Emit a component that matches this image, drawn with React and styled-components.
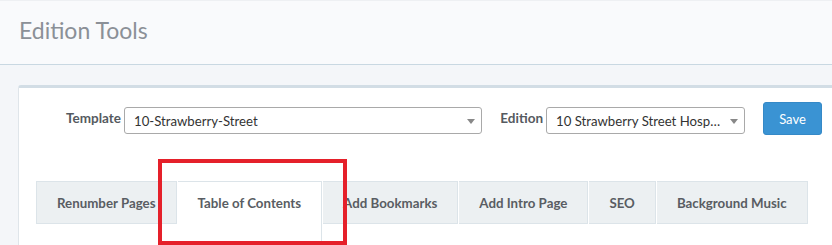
import React from "react";
import styled, { createGlobalStyle } from "styled-components";

const GlobalStyle = createGlobalStyle`
  html, body {
    margin: 0;
    padding: 0;
    background: #f4f6f9;
    font-family: "Lato", "Open Sans", sans-serif;
  }
  * {
    box-sizing: border-box;
  }
`;

const Page = styled.div`
  width: 832px;
  height: 245px;
  overflow: hidden;
  position: relative;
`;

const Header = styled.div`
  height: 65px;
  background: #f9fafc;
  border-top: 1px solid #eef0f3;
  border-bottom: 1px solid #c9d8e2;
  display: flex;
  align-items: center;
  padding: 0 0 6px 19px;
`;

const Title = styled.h1`
  margin: 0;
  font-size: 23px;
  font-weight: 400;
  color: #8b9097;
`;

const Body = styled.div`
  padding: 20px 0 0 18px;
`;

const Card = styled.div`
  background: #fff;
  border-top: 3px solid #d2dde5;
  border-left: 1px solid #dfe5ea;
  border-radius: 3px 0 0 0;
  height: 200px;
  padding: 17px 0 0 17px;
`;

const FormRow = styled.div`
  display: flex;
  align-items: center;
  padding-left: 26px;
`;

const Label = styled.label`
  width: ${(p) => p.width}px;
  text-align: right;
  font-size: 13.5px;
  font-weight: 700;
  color: #555a60;
  margin: 0 3px 4px 0;
  white-space: nowrap;
`;

const Select = styled.div`
  position: relative;
  width: ${(p) => p.width}px;
  height: 27px;
  border: 1px solid #a9a9a9;
  border-radius: 3px;
  font-size: 13.2px;
  color: #333;
  padding: 1px 22px 0 9px;
  display: flex;
  align-items: center;
  white-space: nowrap;
  overflow: hidden;
  margin-right: ${(p) => p.gap}px;

  &::after {
    content: "";
    position: absolute;
    right: 6px;
    top: 11px;
    border-left: 4px solid transparent;
    border-right: 4px solid transparent;
    border-top: 5px solid #888;
  }
`;

const SelectText = styled.span`
  overflow: hidden;
  text-overflow: ellipsis;
`;

const SaveButton = styled.button`
  width: 59px;
  height: 33px;
  background: #3a93d3;
  border: 1px solid #3589c7;
  border-radius: 3px;
  color: #fff;
  font-family: inherit;
  font-size: 13px;
  padding: 0;
  margin-top: -3px;
`;

const Tabs = styled.div`
  display: flex;
  margin-top: 46px;
`;

const Tab = styled.div`
  height: ${(p) => (p.active ? 60 : 43)}px;
  padding: ${(p) => (p.active ? "0 20px 17px" : "0 20px")};
  background: ${(p) => (p.active ? "#fff" : "#ecf0f2")};
  border: 1px solid #dce4e9;
  border-bottom: ${(p) => (p.active ? "none" : "1px solid #dce4e9")};
  border-left: ${(p) => (p.first ? "1px solid #dce4e9" : "none")};
  margin-left: ${(p) => (p.first ? 0 : 1)}px;
  display: flex;
  align-items: center;
  font-size: 13.3px;
  font-weight: 700;
  color: #595d63;
  white-space: nowrap;
`;

const Highlight = styled.div`
  position: absolute;
  left: 158px;
  top: 159px;
  width: 189px;
  height: 86px;
  border: 4.5px solid #e5202a;
  pointer-events: none;
`;

const tabs = [
  "Renumber Pages",
  "Table of Contents",
  "Add Bookmarks",
  "Add Intro Page",
  "SEO",
  "Background Music",
];

export default function App() {
  return (
    <Page>
      <GlobalStyle />
      <Header>
        <Title>Edition Tools</Title>
      </Header>
      <Body>
        <Card>
          <FormRow>
            <Label width={59}>Template</Label>
            <Select width={358} gap={16}>
              <SelectText>10-Strawberry-Street</SelectText>
            </Select>
            <Label width={45}>Edition</Label>
            <Select width={199} gap={18}>
              <SelectText>10 Strawberry Street Hospitality Edition</SelectText>
            </Select>
            <SaveButton>Save</SaveButton>
          </FormRow>
          <Tabs>
            {tabs.map((t, i) => (
              <Tab key={t} first={i === 0} active={i === 1}>
                {t}
              </Tab>
            ))}
          </Tabs>
        </Card>
      </Body>
      <Highlight />
    </Page>
  );
}
